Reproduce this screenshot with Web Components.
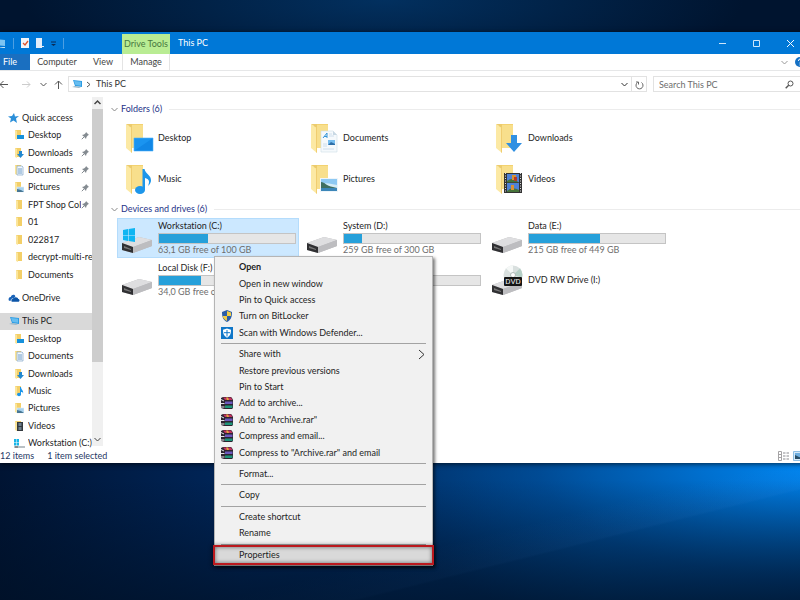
<!DOCTYPE html>
<html lang="en">
<head>
<meta charset="utf-8">
<title>This PC</title>
<style>
html,body{height:100%;margin:0}
body{font:9px/12px Lato,"Open Sans","Liberation Sans",sans-serif;font-variant-ligatures:none;color:#1e1e1e;overflow:hidden}
</style>
</head>
<body>
<desktop-screen>
  <explorer-window>
    <title-bar slot="head"></title-bar>
    <ribbon-tabs slot="head"></ribbon-tabs>
    <address-row slot="head"></address-row>
    <nav-pane slot="side">
      <nav-group style="flex-grow:10">
        <nav-item icon="star" top>Quick access</nav-item>
        <nav-item icon="s-desktop" pinned>Desktop</nav-item>
        <nav-item icon="s-downloads" pinned>Downloads</nav-item>
        <nav-item icon="s-documents" pinned>Documents</nav-item>
        <nav-item icon="s-pictures" pinned>Pictures</nav-item>
        <nav-item icon="s-folder" pinned>FPT Shop Coll</nav-item>
        <nav-item icon="s-folder">01</nav-item>
        <nav-item icon="s-folder">022817</nav-item>
        <nav-item icon="s-folder">decrypt-multi-re</nav-item>
        <nav-item icon="s-folder">Documents</nav-item>
      </nav-group>
      <nav-group style="flex-grow:1">
        <nav-item icon="cloud" top>OneDrive</nav-item>
      </nav-group>
      <nav-group style="flex-grow:8">
        <nav-item icon="pc" top current>This PC</nav-item>
        <nav-item icon="s-desktop">Desktop</nav-item>
        <nav-item icon="s-documents">Documents</nav-item>
        <nav-item icon="s-downloads">Downloads</nav-item>
        <nav-item icon="s-music">Music</nav-item>
        <nav-item icon="s-pictures">Pictures</nav-item>
        <nav-item icon="s-videos">Videos</nav-item>
        <nav-item icon="s-drive">Workstation (C:)</nav-item>
      </nav-group>
    </nav-pane>
    <tile-group label="Folders (6)">
      <folder-tile icon="desktop">Desktop</folder-tile>
      <folder-tile icon="documents">Documents</folder-tile>
      <folder-tile icon="downloads">Downloads</folder-tile>
      <folder-tile icon="music">Music</folder-tile>
      <folder-tile icon="pictures">Pictures</folder-tile>
      <folder-tile icon="videos">Videos</folder-tile>
    </tile-group>
    <tile-group label="Devices and drives (6)">
      <drive-tile icon="windrive" used="36" free="63,1 GB free of 100 GB" selected>Workstation (C:)</drive-tile>
      <drive-tile icon="drive" used="13" free="259 GB free of 300 GB">System (D:)</drive-tile>
      <drive-tile icon="drive" used="52" free="215 GB free of 449 GB">Data (E:)</drive-tile>
      <drive-tile icon="drive" used="31" free="34,0 GB free of">Local Disk (F:)</drive-tile>
      <drive-tile icon="drive" used="0"></drive-tile>
      <drive-tile icon="dvd">DVD RW Drive (I:)</drive-tile>
    </tile-group>
    <status-bar slot="foot"></status-bar>
  </explorer-window>
  <context-menu slot="menu">
    <menu-item bold>Open</menu-item>
    <menu-item>Open in new window</menu-item>
    <menu-item>Pin to Quick access</menu-item>
    <menu-item icon="shield">Turn on BitLocker</menu-item>
    <menu-item icon="defender">Scan with Windows Defender...</menu-item>
    <menu-rule></menu-rule>
    <menu-item more>Share with</menu-item>
    <menu-item>Restore previous versions</menu-item>
    <menu-item>Pin to Start</menu-item>
    <menu-item icon="rar">Add to archive...</menu-item>
    <menu-item icon="rar">Add to "Archive.rar"</menu-item>
    <menu-item icon="rar">Compress and email...</menu-item>
    <menu-item icon="rar">Compress to "Archive.rar" and email</menu-item>
    <menu-rule></menu-rule>
    <menu-item>Format...</menu-item>
    <menu-rule></menu-rule>
    <menu-item>Copy</menu-item>
    <menu-rule></menu-rule>
    <menu-item>Create shortcut</menu-item>
    <menu-item>Rename</menu-item>
    <menu-rule></menu-rule>
    <menu-item marked>Properties</menu-item>
  </context-menu>
</desktop-screen>
<script>
const define = (name, render) => customElements.define(name, class extends HTMLElement {
  constructor() {
    super();
    this.attachShadow({ mode: 'open' });
  }
  connectedCallback() {
    this.shadowRoot.innerHTML = '<style>*{box-sizing:border-box}:host{box-sizing:border-box}a,button,input{font:inherit;color:inherit;text-decoration:none;background:none;border:0;padding:0;margin:0;text-align:left;outline:0}</style>' + render(this);
  }
});

const folder = '<path d="M5 2h14v24H5z" fill="#f3d270"/><path d="M8 3h11v23H8z" fill="#f8df8c"/><path d="M2 2l6 4v25l-6-5z" fill="#fce9a4"/><path d="M2 2h6v4z" fill="#eccb6c"/><path d="M8 6v25l-1-1V5z" fill="#f0cd70"/>';
const small = '<path d="M1 1h6v9H1z" fill="#f3cf68"/><path d="M1 1l2 1v9l-2-1z" fill="#fbe59b"/>';
const drive = '<path d="M1 21l17-6 13 3v6l-19 7-11-3z" fill="#b9b9bb"/><path d="M1 21l17-6 13 3-19 7z" fill="#dedee0"/><path d="M12 25l19-7v6l-19 7z" fill="#bdbdc0"/><path d="M1 21l11 4v6L1 28z" fill="#303033"/><path d="M3 24l7 3v1l-7-2z" fill="#777"/>';
// name: [width, height, view box, body]
const icons = {
  desktop: [32, 32, '0 0 32 32', folder + '<path d="M10 16h19v13H10z" fill="#1a94f0"/><path d="M10 29l19-13v13z" fill="#1187e6"/><path d="M10 16h19v13H10z" fill="none" stroke="#4db1fa" stroke-width=".6"/>'],
  documents: [32, 32, '0 0 32 32', folder + '<path d="M12 9h12l4 4v17H12z" fill="#f5f9fc" stroke="#cfdde6" stroke-width=".6"/><path d="M24 9v4h4z" fill="#c8d8e4"/><path d="M14 16l4-5v5m-3-1.500h3" stroke="#3595d8" fill="none"/><path d="M20 12h3M20 14h5M14 22h4M14 24h4M14 27h11" stroke="#c4d8e8" stroke-width=".8"/><path d="M19 18h7v5h-7z" fill="#76bdef"/><path d="M19 23l3-3 4 2v1z" fill="#2f6fa8"/>'],
  downloads: [32, 32, '0 0 32 32', folder + '<path d="M17 13h6v8h5l-8 9-8-9h5z" fill="#3090e2"/>'],
  music: [32, 32, '0 0 32 32', folder + '<ellipse cx="16" cy="27" rx="5" ry="4" fill="#1d96ea"/><path d="M18.500 6h2c1 5 7 6 6.500 12-.4 2-1 3-3 5 2-5 1-7-3-8v12h-2.500z" fill="#1d96ea"/>'],
  pictures: [32, 32, '0 0 32 32', folder + '<path d="M11 15h18v14H11z" fill="#eef5fa"/><path d="M12 16h16v12H12z" fill="#8ec9f3"/><path d="M12 20q8 0 16 2v3H12z" fill="#d5ecf7"/><path d="M12 19c4 0 5 4 12 5l4 1H12z" fill="#3f6f61"/><path d="M12 25h16v3H12z" fill="#3c86b8"/>'],
  videos: [32, 32, '0 0 32 32', folder + '<path d="M10 10h18v20H10z" fill="#333"/><path d="M13 11h12v18H13z" fill="#4e82d8"/><path d="M13 18q6-5 12 2H13zM13 28q5-5 12-1v2H13z" fill="#47743b"/><path d="M18 12h4v5h-4zM17 22h3v5h-3z" fill="#d99332"/><path d="M20 14h3v4h-3z" fill="#b4372c"/><path d="M13 19.500h12" stroke="#333" stroke-width=".6"/><path d="M11.500 10v20M26.500 10v20" stroke="#ddd" stroke-dasharray="1 1.500"/>'],
  drive: [32, 32, '0 0 32 32', drive],
  windrive: [32, 32, '0 0 32 32', drive + '<path d="M2 8l5-1v6H2zM7.600 7l6.400-1v7H7.600zM2 13.600h5V19l-5-1zM7.600 13.600H14V20l-6.400-1z" fill="#0fb5f2"/>'],
  dvd: [32, 32, '0 0 32 32', drive + '<circle cx="22" cy="11" r="9.500" fill="#d9e0df"/><path d="M22 11L15 4.500A9.500 9.500 0 0 1 22 1.500z" fill="#f5f8f7"/><path d="M22 11l7-6.500a9.500 9.500 0 0 1 2 9z" fill="#b5cfc6"/><circle cx="22" cy="11" r="2.500" fill="#fff" stroke="#aebab6"/><rect x="13" y="13" width="18" height="9" rx="1" fill="#151515"/><text x="22" y="20" text-anchor="middle" font-family="Roboto,sans-serif" font-size="8" fill="#eee">DVD</text>'],
  's-folder': [10, 12, '-1 0 10 12', small],
  's-desktop': [10, 12, '0 0 10 12', small + '<path d="M3 6h7v4H3z" fill="#1691dc"/>'],
  's-downloads': [10, 12, '0 0 10 12', small + '<path d="M5 4h3v3h2l-3.500 4L3 7h2z" fill="#2288cf"/>'],
  's-documents': [10, 12, '0 0 10 12', small + '<path d="M3 2h5l1 1v8H3z" fill="#f4f8fc" stroke="#82a6c8" stroke-width=".7"/><path d="M4 5h4M4 7h4M4 9h4" stroke="#4d86bd" stroke-width=".8"/>'],
  's-pictures': [10, 12, '0 0 10 12', small + '<path d="M3 6h7v5H3z" fill="#a7d2ef" stroke="#e5eef4" stroke-width=".6"/><path d="M3 8l4 1 3 2H3z" fill="#477694"/>'],
  's-music': [10, 12, '0 0 10 12', small + '<ellipse cx="5" cy="9.500" rx="2" ry="1.700" fill="#1d96ea"/><path d="M6 2h1c0 3 3 3 2 7 0-2-1-2-2-2v3H6z" fill="#1d96ea"/>'],
  's-videos': [10, 12, '0 0 10 12', small + '<path d="M3 2h6v9H3z" fill="#33393f"/><path d="M4.500 3h3v3h-3zM4.500 7h3v3h-3z" fill="#6c7f8d"/>'],
  's-drive': [13, 12, '1 0 13 12', '<path d="M1 2h2v3H1zM3.500 2H6v3H3.500zM1 5.500h2v3H1zM3.500 5.500H6v3H3.500z" fill="#18b5e8"/><path d="M1 9h11v2H1z" fill="#b9c0c4"/><path d="M2 10h3" stroke="#555"/>'],
  star: [11, 12, '0 0 11 12', '<path d="M6 1l1 3.500 4-.5-3 2.500L9 11 5.500 8.500 2 10.500l1-4L0 4.500l4-.4z" fill="#2b8fd9"/>'],
  cloud: [12, 12, '0 0 13 12', '<path d="M1 9c-1-2 0-4 2-4 1-3 4-3 5-1L5 9z" fill="#1a63b8"/><path d="M4 10c-1-2 0-3 2-3 1-3 5-2 5 0 2 0 2 3 0 3z" fill="#0c55a8"/><path d="M3.500 9.500c-.5-2 .5-3 2-3" fill="none" stroke="#fff" stroke-width=".6"/>'],
  pc: [12, 12, '-1 0 12 12', '<path d="M1 2l9 1v6L3 8z" fill="#2b9be3"/><path d="M2 3l7 .8v3.900L3.500 7z" fill="#66bdf0"/><path d="M0 9l7 1 2-1-6-1z" fill="#9ab6c8"/>'],
  pin: [9, 9, '0 0 9 9', '<path d="M5 1l3 3-1 .3L5.500 6 5 8 3 5.700 1 4l2-.5L4.700 2z" fill="#848b91"/><path d="M3 6L.8 8.200" stroke="#848b91"/>'],
  min: [9, 9, '0 0 9 9', '<path d="M1 4.500h7" stroke="#cfe6fa"/>'],
  max: [9, 9, '0 0 9 9', '<path d="M1.500 1.500h6v6h-6z" fill="none" stroke="#cfe6fa"/>'],
  close: [9, 9, '0 0 9 9', '<path d="M1 1l7 7M8 1L1 8" stroke="#f4faff"/>'],
  down: [7, 7, '0 0 7 7', '<path d="M.5 2l3 3 3-3" fill="none" stroke="currentColor"/>'],
  up: [7, 7, '0 0 7 7', '<path d="M.5 5l3-3 3 3" fill="none" stroke="currentColor" stroke-width="1.500"/>'],
  right: [5, 7, '0 0 5 7', '<path d="M1 1l3 2.500L1 6" fill="none" stroke="#555"/>'],
  more: [7, 11, '0 0 7 11', '<path d="M1 1l5 4.500L1 10" fill="none" stroke="#333"/>'],
  back: [8, 9, '0 0 8 9', '<path d="M8 4.500H0M3.500 1L0 4.500 3.500 8" fill="none" stroke="#555"/>'],
  fwd: [9, 9, '0 0 9 9', '<path d="M0 4.500h8M5 1.500l3 3-3 3" fill="none" stroke="#ccc"/>'],
  parent: [9, 9, '0 0 9 9', '<path d="M4.500 9V1M1 4.500L4.500 1 8 4.500" fill="none" stroke="#555"/>'],
  refresh: [9, 9, '0 0 9 9', '<path d="M6.500 1.500a3.500 3.500 0 1 1-4 0M1 1h2.500v2.500" fill="none" stroke="#666"/>'],
  search: [9, 9, '0 0 9 9', '<circle cx="5.500" cy="3.500" r="2.500" fill="none" stroke="#555"/><path d="M3.700 5.300L.7 8.300" stroke="#555" stroke-width="1.400"/>'],
  help: [10, 10, '0 0 10 10', '<circle cx="5" cy="5" r="5" fill="#1470c4"/><path d="M3.500 4q0-2 1.500-2t1.500 1.500Q6.500 5 5 5.500v1M5 7.500v1" stroke="#fff" fill="none"/>'],
  details: [11, 10, '0 0 11 10', '<path d="M.5.500h3v9h-3zM.5 3.500h3M.5 6.500h3" fill="none" stroke="#a5a3a5"/><path d="M5 2h6M5 5h6M5 8h6" stroke="#8b8b90" stroke-dasharray="2.500 1"/>'],
  large: [12, 10, '0 0 12 10', '<path d="M.5.500h11v9H.5z" fill="#d6e9f8" stroke="#8fbfe4"/><path d="M2 2h8v6H2z" fill="#6eaee0"/><path d="M2 4l4 2 4 1v1H2z" fill="#294f68"/>'],
  app: [6, 11, '5 0 6 11', '<path d="M0 1l10 1v6L0 7z" fill="#7cc4f2"/><path d="M3 10l5-1h2v1z" fill="#c4e2f4"/>'],
  check: [8, 10, '0 0 8 10', '<path d="M0 0h8v10H0z" fill="#f4f6fa"/><path d="M2 5l2 2 3-4" fill="none" stroke="#e0542e" stroke-width="1.300"/>'],
  page: [8, 10, '0 0 8 10', '<path d="M0 0h6v8h2v1H6v1H0z" fill="#e3eefa"/>'],
  qat: [5, 7, '0 0 5 7', '<path d="M0 2h5" stroke="#0a2c58"/><path d="M0 4h5L2.500 6z" fill="#0a2c58"/>'],
  shield: [12, 12, '0 0 12 12', '<path d="M6 0l5 2c0 5-1 8-5 10C2 10 1 7 1 2z" fill="#2a5da8"/><path d="M6 1l4 1.500V6H6zM6 6v5C3.500 9.800 2 8 1.600 6z" fill="#f0cb45"/>'],
  defender: [12, 12, '0 0 12 12', '<path d="M0 0h12v12H0z" fill="#0f76c8"/><path d="M6 1.500l4 1.300C10 7 9 9 6 10.700 3 9 2 7 2 2.800z" fill="#fff"/><path d="M6 3v6.500M3 5.700h6" stroke="#0f76c8"/>'],
  rar: [12, 12, '0 0 12 12', '<path d="M0 1l2-1h8l1 1 1 2v8l-1 1H3L0 11z" fill="#2c2430"/><path d="M2 .5h8l1.500 2.500H4z" fill="#c2315f"/><path d="M4 4.500h7.500v2.500H4z" fill="#6d58bd"/><path d="M4 8.500h7.500V11H4z" fill="#1d9478"/><path d="M0 2.500l3 1.500M0 6.500h3.500M0 10h3.500" stroke="#e4e4e8"/><path d="M5 .5h2l1 2.500H6z" fill="#e0a83c"/>']
};

define('x-icon', el => {
  const [w, h, box, body] = icons[el.getAttribute('name')];
  return `<style>:host{display:block;flex:none}svg{display:block}</style><svg width="${w}" height="${h}" viewBox="${box}" aria-hidden="true">${body}</svg>`;
});

define('desktop-screen', () => `<style>
:host{display:block;position:relative;min-height:100vh;padding-top:32px;overflow:hidden;
background:linear-gradient(#00102400 80%,#001024aa),
linear-gradient(166deg,#4aa0ff00 82%,#4aa0ff12 86%,#4aa0ff00 86.300%),
radial-gradient(ellipse 58% 32% at 102% 77%,#0088f4 0,#007ae0dd 25%,#0062bd88 60%,#0050a000 100%),
radial-gradient(ellipse 45% 14% at 48% 0,#02305f,#02305f00 100%),
linear-gradient(90deg,#001433,#00265a 30%,#003268 75%,#002350) 0 100%/100% 24% no-repeat,#00142f}
</style><slot></slot><slot name="menu"></slot>`);

define('explorer-window', () => `<style>
:host{display:block;margin-right:-5px;background:#fff;box-shadow:0 1px 5px #000a}
.body{display:grid;grid-template-columns:103px 1fr}
main{padding:6px 5px 0 8px;min-width:0}
</style><slot name="head"></slot><div class="body"><slot name="side"></slot><main><slot></slot></main></div><slot name="foot"></slot>`);

define('title-bar', () => `<style>
:host{display:flex;height:22px;background:#0078d7;color:#fff;align-items:center}
.qat{display:flex;align-items:center;width:122px;gap:7px}
i{width:1px;height:11px;background:#4d9fe2}
.tools{align-self:flex-end;width:48px;height:20px;line-height:20px;text-align:center;white-space:nowrap;background:#b9ec93;color:#47783f}
h1{font:inherit;margin:0 8px;flex:1}
.ctl{display:flex;gap:25px;padding-right:10px}
button{display:block}
</style><div class="qat"><x-icon name="app"></x-icon><i></i><x-icon name="check"></x-icon><x-icon name="page"></x-icon><x-icon name="qat"></x-icon><i></i></div>
<span class="tools">Drive Tools</span><h1>This PC</h1>
<div class="ctl"><button aria-label="Minimize"><x-icon name="min"></x-icon></button><button aria-label="Maximize"><x-icon name="max"></x-icon></button><button aria-label="Close"><x-icon name="close"></x-icon></button></div>`);

define('ribbon-tabs', () => `<style>
:host{display:flex;height:17px;align-items:center;border-bottom:1px solid #e6e7e8;color:#444}
button{height:16px;text-align:center}
.file{width:30px;background:#1a6fc0;color:#fff;padding-right:10px}
.c{width:54px}.v{width:38px}.m{width:48px;border:solid #e4e4e4;border-width:0 1px}
div{display:flex;align-items:center;gap:7px;margin-left:auto;color:#999}
div button{display:flex;align-items:center}
</style><button class="file">File</button><button class="c">Computer</button><button class="v">View</button><button class="m">Manage</button>
<div><button aria-label="Collapse ribbon"><x-icon name="down"></x-icon></button><button aria-label="Help"><x-icon name="help"></x-icon></button></div>`);

define('address-row', () => `<style>
:host{display:flex;height:26px;align-items:center;color:#555}
button{display:block}
.nav{display:grid;grid-template-columns:22px 18px 14px 9px;align-items:center}
.box{display:flex;align-items:center;height:16px;border:1px solid #e2e2e2}
.addr{flex:1;margin:0 6px 0 5px;padding-left:2px;gap:3px;color:#333}
.addr a{flex:1;margin-left:2px}
.re{border-left:1px solid #e2e2e2;height:14px;padding:2px 2px 0 3px}
.find{width:152px;padding:0 10px 0 5px}
input{flex:1;min-width:0;height:14px}
input::placeholder{color:#6d6d6d;opacity:1}
</style><div class="nav"><button aria-label="Back"><x-icon name="back"></x-icon></button><button aria-label="Forward"><x-icon name="fwd"></x-icon></button><button aria-label="Recent"><x-icon name="down"></x-icon></button><button aria-label="Up"><x-icon name="parent"></x-icon></button></div>
<div class="box addr"><x-icon name="pc"></x-icon><x-icon name="right"></x-icon><a href="#">This PC</a><button aria-label="History"><x-icon name="down"></x-icon></button><button class="re" aria-label="Refresh"><x-icon name="refresh"></x-icon></button></div>
<div class="box find"><input type="search" placeholder="Search This PC" aria-label="Search This PC"><x-icon name="search"></x-icon></div>`);

define('nav-pane', () => `<style>
:host{display:flex;height:355px}
nav{flex:1;min-width:0;display:flex;flex-direction:column;gap:6px;padding-top:12px;overflow:hidden}
.bar{width:11px;margin-bottom:6px;background:#f0f0f0;display:flex;flex-direction:column;align-items:center;color:#444}
.thumb{width:11px;background:#cdcdcd;height:253px}
.bar x-icon{padding:2px 0 3px}
.bar x-icon:last-child{margin-top:auto}
</style><nav><slot></slot></nav><div class="bar"><x-icon name="up"></x-icon><div class="thumb"></div><x-icon name="down"></x-icon></div>`);

define('nav-group', () => `<style>:host{display:flex;flex-direction:column;flex-basis:0}</style><slot></slot>`);

define('nav-item', el => `<style>
:host{display:block;flex:1;min-height:0}
a{display:flex;align-items:center;height:100%;padding-left:${el.hasAttribute('top') ? 8 : 14}px;${el.hasAttribute('current') ? 'background:#d9d9d9;' : ''}}
.ic{width:14px;flex:none}
span{flex:1;min-width:0;overflow:hidden;white-space:nowrap}
.pin{margin-right:2px}
</style><a href="#"><x-icon class="ic" name="${el.getAttribute('icon')}"></x-icon><span><slot></slot></span>${el.hasAttribute('pinned') ? '<x-icon class="pin" name="pin"></x-icon>' : ''}</a>`);

define('tile-group', el => `<style>
:host{display:block;color:#1e1e1e}
h2{font:inherit;color:#1e3287;margin:0;display:flex;align-items:center;gap:3px;height:12px}
h2::after{content:"";flex:1;height:1px;background:#ececec;margin-left:4px}
h2 x-icon{color:#888}
.tiles{display:grid;grid-template-columns:repeat(auto-fill,182px);gap:2px 3px;padding:3px 0 5px 6px}
</style><h2><x-icon name="down"></x-icon>${el.getAttribute('label')}</h2><div class="tiles"><slot></slot></div>`);

define('folder-tile', el => `<style>
:host{display:block}
a{display:flex;align-items:center;height:39px;padding-left:7px;gap:2px}
</style><a href="#"><x-icon name="${el.getAttribute('icon')}"></x-icon><slot></slot></a>`);

define('drive-tile', el => {
  const used = el.getAttribute('used');
  return `<style>
:host{display:block}
a{display:flex;align-items:center;height:40px;padding:0 3px 0 4px;gap:5px;${el.hasAttribute('selected') ? 'background:#cce8ff;outline:1px solid #b4dcfc;outline-offset:-1px;' : ''}}
.info{flex:1;min-width:0}
.name{height:13px;white-space:nowrap}
.bar{height:11px;background:#e6e6e6;border:1px solid #c4c4c4}
.bar div{height:9px;width:${used}%;background:#26a0da}
.free{color:#6d6d6d;height:13px;white-space:nowrap}
</style><a href="#"><x-icon name="${el.getAttribute('icon')}"></x-icon>${used === null ? '<slot></slot>' : `<div class="info"><div class="name"><slot></slot></div><div class="bar"><div></div></div><div class="free">${el.getAttribute('free') || ''}</div></div>`}</a>`;
});

define('status-bar', () => `<style>
:host{display:flex;align-items:center;gap:13px;height:11px;line-height:11px;color:#1f3864}
span{padding-bottom:4px}
.v{margin-left:auto;display:flex;gap:4px;padding-bottom:4px}
button{display:block}
</style><span>12 items</span><span>1 item selected</span><div class="v"><button aria-label="Details"><x-icon name="details"></x-icon></button><button aria-label="Large icons"><x-icon name="large"></x-icon></button></div>`);

define('context-menu', () => `<style>
:host{position:absolute;left:214px;top:256px;width:219px;height:310px;display:flex;flex-direction:column;padding:2px 0;background:#f1f1f1;border:1px solid #b5b5b5;box-shadow:2px 2px 3px #0008}
</style><slot></slot>`);

define('menu-rule', () => `<style>:host{display:flex;align-items:center;height:5px;flex:none;padding:0 6px}hr{flex:1;border:0;height:1px;margin:0;background:#a3a3a3}</style><hr>`);

define('menu-item', el => `<style>
:host{display:block;flex:1;min-height:0}
button{display:flex;align-items:center;width:100%;height:100%;padding:0 7px 0 6px;font-weight:${el.hasAttribute('bold') ? 700 : 400};${el.hasAttribute('marked') ? 'background:#d9d9d9;outline:2px solid #bb191e;box-shadow:0 1px 4px 3px #0007,inset 0 0 4px #0008;' : ''}}
.ic{width:18px;flex:none}
span{flex:1}
</style><button><div class="ic">${el.hasAttribute('icon') ? `<x-icon name="${el.getAttribute('icon')}"></x-icon>` : ''}</div><span><slot></slot></span>${el.hasAttribute('more') ? '<x-icon name="more"></x-icon>' : ''}</button>`);
</script>
</body>
</html>
